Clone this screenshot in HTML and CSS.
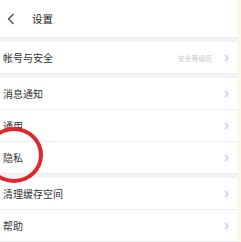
FILE: index.html
```html
<!DOCTYPE html>
<html lang="zh">
<head>
<meta charset="utf-8">
<link rel="stylesheet" href="styles.css">
</head>
<body>
<div class="page">
  <div class="header">
    <svg class="back" width="8" height="12" viewBox="0 0 8 12"><path d="M6.5 1 L1.5 6 L6.5 11" fill="none" stroke="#444" stroke-width="1.2"/></svg>
    <span class="title">设置</span>
  </div>
  <div class="band"></div>
  <div class="group">
    <div class="row"><span class="label">帐号与安全</span><span class="right"><span class="hint">安全等级低</span><svg class="chev" width="5" height="8" viewBox="0 0 5 8"><path d="M1 1 L4 4 L1 7" fill="none" stroke="#c4c4c4" stroke-width="1.1"/></svg></span></div>
  </div>
  <div class="band"></div>
  <div class="group">
    <div class="row line"><span class="label">消息通知</span><svg class="chev" width="5" height="8" viewBox="0 0 5 8"><path d="M1 1 L4 4 L1 7" fill="none" stroke="#c4c4c4" stroke-width="1.1"/></svg></div>
    <div class="row line"><span class="label">通用</span><svg class="chev" width="5" height="8" viewBox="0 0 5 8"><path d="M1 1 L4 4 L1 7" fill="none" stroke="#c4c4c4" stroke-width="1.1"/></svg></div>
    <div class="row"><span class="label">隐私</span><svg class="chev" width="5" height="8" viewBox="0 0 5 8"><path d="M1 1 L4 4 L1 7" fill="none" stroke="#c4c4c4" stroke-width="1.1"/></svg></div>
  </div>
  <div class="band"></div>
  <div class="group">
    <div class="row line"><span class="label">清理缓存空间</span><svg class="chev" width="5" height="8" viewBox="0 0 5 8"><path d="M1 1 L4 4 L1 7" fill="none" stroke="#c4c4c4" stroke-width="1.1"/></svg></div>
    <div class="row line"><span class="label">帮助</span><svg class="chev" width="5" height="8" viewBox="0 0 5 8"><path d="M1 1 L4 4 L1 7" fill="none" stroke="#c4c4c4" stroke-width="1.1"/></svg></div>
  </div>
  <div class="circle"></div>
</div>
</body>
</html>
```
FILE: styles.css
```css
html, body { margin: 0; padding: 0; background: #fff; }
body { font-family: "Noto Sans CJK SC", "Noto Sans", sans-serif; color: #333; }
.page { position: relative; width: 238px; height: 242px; overflow: hidden; border-right: 3px solid #fdf6e6; }
.header { height: 37px; display: flex; align-items: center; padding-left: 7px; }
.back { margin-top: 1px; }
.title { margin-left: 17px; font-size: 10.5px; color: #222; }
.band { height: 4px; background: #f2f2f2; border-top: 1px solid #ececec; }
.row { height: 31px; display: flex; align-items: center; justify-content: space-between; padding: 0 9px 0 3px; }
.row.line { border-bottom: 1px solid #ededed; }
.label { font-size: 10px; color: #333; }
.right { display: flex; align-items: center; gap: 12px; }
.hint { font-size: 6.8px; color: #c8c8c8; }
.chev { display: block; }
.circle { position: absolute; left: -15px; top: 127px; width: 50px; height: 48px; border: 4.5px solid #e0262e; border-radius: 50%; }
```
